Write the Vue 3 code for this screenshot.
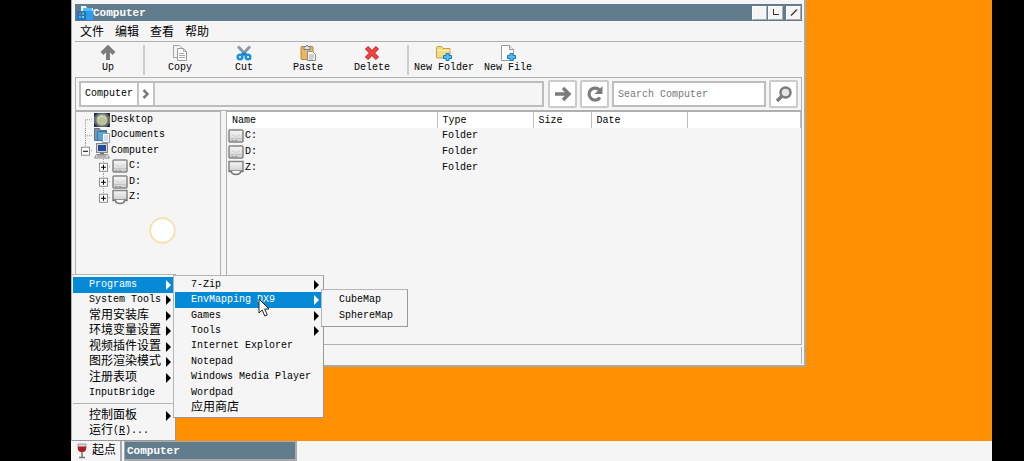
<script setup>
import { ref } from 'vue'

const query = ref('')
const menus = ['文件', '编辑', '查看', '帮助']

const tools = [
  [{ id: 'up', label: 'Up' }],
  [
    { id: 'copy', label: 'Copy' },
    { id: 'cut', label: 'Cut' },
    { id: 'paste', label: 'Paste' },
    { id: 'delete', label: 'Delete' },
  ],
  [
    { id: 'folder', label: 'New Folder' },
    { id: 'file', label: 'New File' },
  ],
]

const tree = [
  { label: 'Desktop', icon: 'desktop', level: 1, from: '50%', to: '100%' },
  { label: 'Documents', icon: 'documents', level: 1, from: '0%', to: '100%' },
  { label: 'Computer', icon: 'computer', level: 1, from: '0%', to: '50%', box: '-' },
  { label: 'C:', icon: 'drive', level: 2, from: '0%', to: '100%', box: '+' },
  { label: 'D:', icon: 'drive', level: 2, from: '0%', to: '100%', box: '+' },
  { label: 'Z:', icon: 'net', level: 2, from: '0%', to: '50%', box: '+' },
]

const rows = [
  { name: 'C:', icon: 'drive', type: 'Folder' },
  { name: 'D:', icon: 'drive', type: 'Folder' },
  { name: 'Z:', icon: 'net', type: 'Folder' },
]

const startItems = [
  { label: 'System Tools', sub: true },
  { label: '常用安装库', sub: true, cjk: true },
  { label: '环境变量设置', sub: true, cjk: true },
  { label: '视频插件设置', sub: true, cjk: true },
  { label: '图形渲染模式', sub: true, cjk: true },
  { label: '注册表项', sub: true, cjk: true },
  { label: 'InputBridge' },
]

const programs = [
  { label: '7-Zip', sub: true },
  { label: 'EnvMapping DX9', sub: true, open: ['CubeMap', 'SphereMap'] },
  { label: 'Games', sub: true },
  { label: 'Tools', sub: true },
  { label: 'Internet Explorer' },
  { label: 'Notepad' },
  { label: 'Windows Media Player' },
  { label: 'Wordpad' },
  { label: '应用商店', cjk: true },
]
</script>

<template>
  <div class="screen">
    <svg class="defs" width="0" height="0" aria-hidden="true">
      <defs>
        <linearGradient id="metal" x1="0" y1="0" x2="0" y2="1">
          <stop offset="0" stop-color="#f7f7f7" />
          <stop offset="1" stop-color="#cfcfcf" />
        </linearGradient>
      </defs>
      <symbol id="i-up" viewBox="0 0 16 16">
        <path d="M8 15V3M2 8.500l6-6 6 6" fill="none" stroke="#7d7d7d" stroke-width="4" />
      </symbol>
      <symbol id="i-copy" viewBox="0 0 16 16">
        <path d="M1.500.5h6l3 3v9h-9z" fill="#f4f4f4" stroke="#a5a5a5" />
        <path d="M5.500 3.500h6l3 3v9h-9z" fill="#fff" stroke="#9a9a9a" />
        <path d="M11.500 3.500v3h3M7 8.500h5M7 10.500h6M7 12.500h6" fill="none" stroke="#aaa" />
      </symbol>
      <symbol id="i-cut" viewBox="0 0 16 16">
        <path d="M2 1.500l8.500 9M14 1.500l-8.500 9" stroke="#8799a8" stroke-width="3" />
        <path d="M8 8l-3 3M8 8l3 3" stroke="#1783cf" stroke-width="3" />
        <circle cx="4" cy="12" r="2.300" fill="none" stroke="#1f90dc" stroke-width="2.500" />
        <circle cx="12" cy="12" r="2.300" fill="none" stroke="#1f90dc" stroke-width="2.500" />
      </symbol>
      <symbol id="i-paste" viewBox="0 0 16 16">
        <rect x="1" y="1.500" width="12" height="13" rx="1" fill="#e9b75c" stroke="#b98632" />
        <path d="M4 1.500h2l1-1.500 1 1.500h2v3H4z" fill="#d9e2ea" stroke="#71808c" />
        <path d="M7.500 6.500h5l3 3v6h-8z" fill="#f7f7f7" stroke="#8c8c8c" />
        <path d="M9 10h5M9 12h5M9 14h4" stroke="#a5a5a5" />
      </symbol>
      <symbol id="i-delete" viewBox="0 0 16 16">
        <path d="M2.500 2.500l11 11M13.500 2.500l-11 11" stroke="#c92a27" stroke-width="4.500" />
        <path d="M3 3l10 10M13 3L3 13" stroke="#f04540" stroke-width="2.500" />
      </symbol>
      <symbol id="i-folder" viewBox="0 0 16 16">
        <path d="M.5 2.500q0-1 1-1h4l1.500 2h7v9.500H1.500q-1 0-1-1z" fill="#f3dc84" stroke="#c5a14b" />
        <path d="M1 5.500h13" stroke="#fbf0b9" />
        <path d="M10 8.500h3v2h2.500v3H13v2h-3v-2H7.500v-3H10z" fill="#54bdf1" stroke="#187bbd" />
      </symbol>
      <symbol id="i-file" viewBox="0 0 16 16">
        <path d="M1.500.5h8l4 4v11h-12z" fill="#fff" stroke="#999" />
        <path d="M9.500.5v4h4" fill="#eee" stroke="#999" />
        <path d="M10 8.500h3v2h2.500v3H13v2h-3v-2H7.500v-3H10z" fill="#54bdf1" stroke="#187bbd" />
      </symbol>
      <symbol id="i-app" viewBox="0 0 16 16">
        <path d="M4 1h5l1 2h6v9H4z" fill="#e9f7ff" />
        <path d="M6 3h9v3H6z" fill="#54b9f7" />
        <path d="M5 6h11v9H3z" fill="#2a9df1" />
        <rect y="6" width="9" height="9" fill="#1778cf" />
        <path d="M2 8h2v2H2z" fill="#e45a3c" />
        <path d="M5 7.500h2v2H5z" fill="#7acb3f" />
        <path d="M2 11h2v2H2z" fill="#47b2f6" />
        <path d="M5 11h2v2H5z" fill="#9fd06b" />
      </symbol>
      <symbol id="i-desktop" viewBox="0 0 16 16">
        <path d="M0 1h16v14H0z" fill="#5d6b82" />
        <path d="M0 1h4L0 5zM16 1h-4l4 4zM0 15h4l-4-4zM16 15h-4l4-4z" fill="#252d3e" />
        <circle cx="8" cy="8" r="6" fill="#bcc29a" stroke="#777e62" />
        <path d="M4 7q4-5 8 0" fill="none" stroke="#dadfbd" />
      </symbol>
      <symbol id="i-documents" viewBox="0 0 16 16">
        <path d="M.5 1.500h5l1 2h6v10H.5z" fill="#83929f" stroke="#62717e" />
        <path d="M3.500 4.500h9v9h-9z" fill="#55a6df" stroke="#2d78b3" />
        <path d="M8.500 6.500h7v9h-7z" fill="#f8fafc" stroke="#899cad" />
        <path d="M10 9h4M10 11h4M10 13h4" stroke="#b5c2ce" />
      </symbol>
      <symbol id="i-computer" viewBox="0 0 16 16">
        <rect x="2.500" y=".5" width="11" height="9" fill="#d4d4d4" stroke="#858585" />
        <rect x="4" y="2" width="8" height="6" fill="#254d9f" />
        <path d="M2.500 11.500h11l2 3.500H.5z" fill="#e7e7e7" stroke="#8a8a8a" />
        <path d="M6 10.500h4M3 13h9" stroke="#777" />
      </symbol>
      <symbol id="i-drive" viewBox="0 0 16 16">
        <rect x="1" y="2" width="14" height="12" rx="1" fill="url(#metal)" stroke="#858585" stroke-width="1.500" />
        <path d="M2 10.500h12" stroke="#c4c4c4" />
        <path d="M4 7q4 3 8 0" fill="none" stroke="#d5d5d5" />
        <path d="M3.500 12.500h2M7 12.500h2" stroke="#999" />
      </symbol>
      <symbol id="i-net" viewBox="0 0 16 16">
        <path d="M1 1.500h14v9.500H1z" fill="url(#metal)" stroke="#858585" stroke-width="1.500" />
        <path d="M.5 11.500h3q0 3 4.500 3t4.500-3h3" fill="#eee" stroke="#777" stroke-width="1.500" />
        <path d="M4.500 11h7v1q-3.500 2-7 0z" fill="#fff" />
      </symbol>
      <symbol id="i-glass" viewBox="0 0 16 16">
        <path d="M4 1h8v4q0 4-4 4T4 5z" fill="#dfdada" stroke="#9b9696" />
        <path d="M4 3.500h8V5q0 4-4 4T4 5z" fill="#b31925" />
        <path d="M8 9v5M5 14.500h6" stroke="#777" stroke-width="1.500" />
      </symbol>
    </svg>

    <main class="desktop">
      <section class="window" aria-label="Computer">
        <header class="titlebar">
          <svg class="ico"><use href="#i-app" /></svg>
          <h1>Computer</h1>
          <button class="cap" aria-label="Minimize"></button>
          <button class="cap" aria-label="Maximize">
            <svg viewBox="0 0 11 11"><path d="M3.500 2v6M3 7.500h6" stroke="#333" fill="none" /></svg>
          </button>
          <button class="cap close" aria-label="Close">
            <svg viewBox="0 0 11 11"><path d="M3 8.500l6-6" stroke="#333" stroke-width="1.200" /></svg>
          </button>
        </header>

        <nav class="menubar">
          <button v-for="m in menus" :key="m">{{ m }}</button>
        </nav>

        <div class="toolbar">
          <div v-for="(group, i) in tools" :key="i" class="group">
            <button v-for="t in group" :key="t.id">
              <svg class="ico"><use :href="'#i-' + t.id" /></svg>
              <span>{{ t.label }}</span>
            </button>
          </div>
        </div>

        <div class="address">
          <div class="crumbs">
            <button class="crumb">Computer</button>
            <button class="crumb chev" aria-label="Expand">
              <svg viewBox="0 0 10 12"><path d="M2.500 2l4 4-4 4" fill="none" stroke="#7b7b7b" stroke-width="2.500" /></svg>
            </button>
          </div>
          <button class="sq" aria-label="Go">
            <svg viewBox="0 0 18 18"><path d="M1 9h14M9 3l6 6-6 6" fill="none" stroke="#7b7b7b" stroke-width="3.500" /></svg>
          </button>
          <button class="sq" aria-label="Refresh">
            <svg viewBox="0 0 18 18">
              <path d="M14 12.500A6 6 0 1 1 13.500 5" fill="none" stroke="#7b7b7b" stroke-width="3.200" />
              <path d="M16.500 1v8h-8z" fill="#7b7b7b" />
            </svg>
          </button>
          <input v-model="query" type="text" placeholder="Search Computer" aria-label="Search Computer" />
          <button class="sq" aria-label="Search">
            <svg viewBox="0 0 18 18">
              <path d="M7 11l-5 5" stroke="#7b7b7b" stroke-width="3.500" />
              <circle cx="10.500" cy="7.500" r="5" fill="#e4e4e4" stroke="#7b7b7b" stroke-width="2.500" />
            </svg>
          </button>
        </div>

        <div class="panes">
          <div class="side">
            <ul class="tree">
              <li v-for="n in tree" :key="n.label" :class="'level' + n.level">
                <svg class="gutter">
                  <line x1="9.500" :y1="n.from" x2="9.500" :y2="n.to" />
                  <line x1="9" y1="50%" x2="19" y2="50%" />
                  <svg v-if="n.box" x="5" y="50%" overflow="visible">
                    <rect x=".5" y="-3.500" width="8" height="8" fill="#fff" stroke="#8c8c8c" />
                    <path :d="n.box === '+' ? 'M2 .5h5M4.500-2v5' : 'M2 .5h5'" stroke="#000" />
                  </svg>
                </svg>
                <svg class="ico"><use :href="'#i-' + n.icon" /></svg>
                <span>{{ n.label }}</span>
              </li>
            </ul>
          </div>
          <div class="list">
            <table>
              <colgroup>
                <col class="c-name" /><col class="c-type" /><col class="c-size" /><col class="c-date" /><col />
              </colgroup>
              <thead>
                <tr><th>Name</th><th>Type</th><th>Size</th><th>Date</th><th></th></tr>
              </thead>
              <tbody>
                <tr v-for="r in rows" :key="r.name">
                  <td>
                    <div class="cell"><svg class="ico"><use :href="'#i-' + r.icon" /></svg>{{ r.name }}</div>
                  </td>
                  <td>{{ r.type }}</td><td></td><td></td><td></td>
                </tr>
              </tbody>
            </table>
          </div>
        </div>
        <footer class="status"></footer>
      </section>

      <div class="touch"></div>

      <nav class="menu start">
        <ul class="main">
          <li class="on">
            <button>Programs<i></i></button>
            <ul class="menu programs">
              <li v-for="p in programs" :key="p.label" :class="{ on: p.open, cjk: p.cjk }">
                <button>{{ p.label }}<i v-if="p.sub"></i></button>
                <ul v-if="p.open" class="menu maps">
                  <li v-for="o in p.open" :key="o"><button>{{ o }}</button></li>
                </ul>
              </li>
            </ul>
          </li>
          <li v-for="s in startItems" :key="s.label" :class="{ cjk: s.cjk }">
            <button>{{ s.label }}<i v-if="s.sub"></i></button>
          </li>
        </ul>
        <hr />
        <ul class="system">
          <li class="cjk"><button>控制面板<i></i></button></li>
          <li class="cjk"><button>运行<span class="run">(<u>R</u>)...</span></button></li>
        </ul>
      </nav>

      <svg class="cursor" viewBox="0 0 12 20">
        <path d="M1 1v14l3.200-3 2.600 6 2.500-1-2.600-6H11z" fill="#fff" stroke="#222" />
      </svg>

      <footer class="taskbar">
        <button class="begin"><svg class="ico"><use href="#i-glass" /></svg>起点</button>
        <button class="task">Computer</button>
      </footer>
    </main>
  </div>
</template>

<style>
body {
  background: #000;
}
</style>

<style scoped>
* {
  box-sizing: border-box;
}
.screen {
  height: 100vh;
  padding: 0 32px 0 71px;
  background: #000;
  color: #000;
  font: 10px/14px 'Liberation Mono', 'Noto Sans CJK SC', monospace;
}
.defs {
  position: absolute;
}
.desktop {
  position: relative;
  display: flex;
  flex-direction: column;
  height: 100%;
  background: #ff9003;
}
button {
  display: flex;
  align-items: center;
  margin: 0;
  padding: 0;
  border: 0;
  background: none;
  color: inherit;
  font: inherit;
  white-space: nowrap;
}
ul {
  margin: 0;
  padding: 0;
  list-style: none;
}
.ico {
  flex: none;
  width: 16px;
  height: 16px;
}
.window {
  position: absolute;
  top: 0;
  left: 0;
  width: 735px;
  padding: 4px 2px 1px 3px;
  border: solid #a9a9a9;
  border-width: 0 2px 2px 1px;
  background: #f5f5f5;
}
.titlebar {
  display: flex;
  align-items: center;
  height: 17px;
  padding: 0 1px 0 2px;
  background: #617d8d;
  color: #fff;
}
.titlebar h1 {
  flex: 1;
  margin: 0;
  font-size: 11px;
  line-height: 16px;
}
.cap {
  justify-content: center;
  width: 15px;
  height: 14px;
  margin-left: 1px;
  border: 1px solid;
  border-color: #fff #aaa #aaa #fff;
  background: #f5f5f5;
}
.cap svg {
  width: 11px;
  height: 11px;
}
.close {
  margin-left: 3px;
}
.menubar {
  display: flex;
  gap: 11px;
  height: 21px;
  padding: 3px 5px 0;
  border-bottom: 1px solid #b0b0b0;
  font-size: 12px;
}
.toolbar {
  display: flex;
  height: 35px;
  padding: 3px 1px 0;
}
.group {
  display: flex;
}
.group + .group::before {
  content: '';
  width: 2px;
  height: 30px;
  margin: 0 3px;
  background: #cdcdcd;
}
.toolbar button {
  flex-direction: column;
  width: 64px;
}
.address {
  display: flex;
  align-items: center;
  gap: 3px;
  height: 34px;
  padding: 0 3px;
  border: 1px solid #b0b0b0;
}
.crumbs {
  display: flex;
  flex: 1;
  height: 26px;
  margin-right: 1px;
  border: 2px solid #bdbdbd;
}
.crumb {
  padding: 0 4px;
  border-right: 2px solid #c4c4c4;
  background: #fff;
}
.chev {
  padding: 0 2px;
}
.chev svg {
  width: 10px;
  height: 12px;
}
.sq {
  justify-content: center;
  width: 29px;
  height: 28px;
  border: 2px solid #cbcbcb;
  border-radius: 2px;
  background: #fff;
}
.sq svg {
  flex: none;
  width: 18px;
  height: 18px;
}
.address input {
  width: 154px;
  height: 26px;
  padding: 0 4px;
  border: 2px solid #bdbdbd;
  border-radius: 0;
  background: #fff;
  font: inherit;
}
.address input::placeholder {
  color: #777;
  opacity: 1;
}
.panes {
  display: flex;
  gap: 5px;
  min-height: 234px;
  border-bottom: 1px solid #b0b0b0;
}
.side {
  width: 146px;
  border: solid #b0b0b0;
  border-width: 1px 1px 0 1px;
}
.tree {
  display: grid;
  grid-auto-rows: 1fr;
  height: 93px;
}
.tree li {
  display: flex;
  align-items: center;
  gap: 1px;
  min-height: 0;
}
.tree .level2 {
  padding-left: 18px;
}
.gutter {
  flex: none;
  width: 17px;
  height: 100%;
}
.gutter line {
  stroke: #999;
  stroke-dasharray: 1 1;
}
.list {
  flex: 1;
  border: solid #b0b0b0;
  border-width: 1px 1px 0 1px;
}
table {
  width: 100%;
  border-collapse: collapse;
  table-layout: fixed;
}
.c-name {
  width: 210px;
}
.c-type,
.c-date {
  width: 96px;
}
.c-size {
  width: 58px;
}
th {
  height: 16px;
  padding: 1px 5px 0;
  border-right: 1px solid #bdbdbd;
  background: #fff;
  font-weight: 400;
  text-align: left;
}
td {
  height: 16px;
  padding: 0 5px;
}
td:first-child {
  padding: 0 1px;
}
.cell {
  display: flex;
  align-items: center;
  gap: 1px;
}
.status {
  height: 17px;
  margin-top: 2px;
  border-right: 1px solid #b0b0b0;
}
.touch {
  position: absolute;
  top: 218px;
  left: 79px;
  width: 25px;
  height: 25px;
  border: 1px solid #f8dda0;
  border-radius: 50%;
  background: #fff;
  box-shadow: 0 0 2px #f5c666;
}
.menu {
  position: absolute;
  border: 1px solid;
  border-color: #b5b5b5 #999 #999 #b5b5b5;
  background: #f5f5f5;
  color: #000;
}
.menu li {
  position: relative;
  display: flex;
  min-height: 0;
}
.menu button {
  flex: 1;
  padding: 0 3px 0 16px;
}
.menu .cjk > button {
  font-size: 12px;
}
.menu .run {
  font-size: 10px;
}
.menu li.on > button {
  background: #078ad5;
  color: #fff;
}
.menu i {
  margin-left: auto;
  border: solid transparent;
  border-width: 5px 0 5px 5px;
  border-left-color: currentColor;
}
.start {
  bottom: 20px;
  left: 0;
  width: 105px;
  padding: 2px 1px 1px;
}
.main,
.system,
.programs {
  display: grid;
  grid-auto-rows: 1fr;
}
.main {
  height: 124px;
}
.system {
  height: 31px;
}
.start hr {
  height: 1px;
  margin: 2px 0 4px;
  border: 0;
  background: #b5b5b5;
}
.programs {
  top: -2px;
  left: calc(100% - 1px);
  width: 151px;
  height: 143px;
  padding: 1px;
}
.maps {
  top: -3px;
  left: calc(100% - 1px);
  width: 87px;
  padding: 2px 1px;
}
.maps li {
  height: 16px;
}
.cursor {
  position: absolute;
  top: 298px;
  left: 187px;
  width: 12px;
  height: 20px;
}
.taskbar {
  display: flex;
  gap: 2px;
  height: 20px;
  margin-top: auto;
  background: #f5f5f5;
}
.begin {
  gap: 2px;
  width: 51px;
  padding-left: 3px;
  border-right: 2px solid #aaa;
  font-size: 12px;
}
.task {
  width: 173px;
  padding-left: 2px;
  border: solid #aaa;
  border-width: 1px 2px 2px 1px;
  background: #617d8d;
  color: #fff;
  font-size: 11px;
  font-weight: 700;
}
</style>
